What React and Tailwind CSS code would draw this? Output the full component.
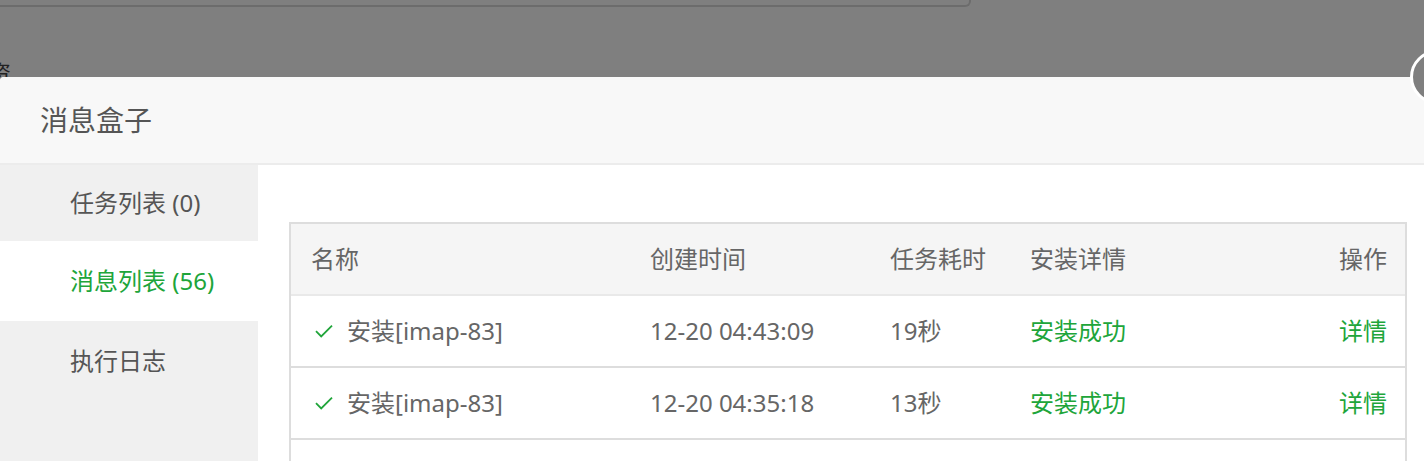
import { Check } from 'lucide-react';

const rows = [
    { name: '安装[imap-83]', time: '12-20 04:43:09', cost: '19秒', status: '安装成功' },
    { name: '安装[imap-83]', time: '12-20 04:35:18', cost: '13秒', status: '安装成功' },
];

function CheckMark() {
    return (
        <svg width="18" height="14" viewBox="0 0 18 14" fill="none" className="shrink-0">
            <path d="M1 7.2 6.2 12.4 17 1.6" stroke="#20a53a" strokeWidth="1.8" />
        </svg>
    );
}

export default function App() {
    return (
        <div className="relative w-[1424px] h-[461px] overflow-hidden bg-[#7f7f7f] font-['Noto_Sans','Noto_Sans_CJK_SC',sans-serif]">
            {/* page behind the overlay */}
            <div className="h-[77px] overflow-hidden">
                <div className="h-[7px] w-[971px] border-b-2 border-r-2 border-[#6c6c6c] rounded-br-[6px]" />
                <div className="mt-[54px] -ml-[11px] text-[22px] leading-none text-[#222]">资</div>
            </div>

            {/* modal */}
            <div className="w-[1437px] h-[384px] flex flex-col rounded-tl-[4px] overflow-hidden bg-white">
                <div className="h-[88px] shrink-0 flex items-center px-[40px] bg-[#f8f8f8] border-b-2 border-[#ececec] text-[28px] text-[#555]">
                    消息盒子
                </div>
                <div className="flex flex-1">
                    <div className="w-[258px] shrink-0 bg-[#f0f0f0] text-[24px] text-[#555]">
                        <div className="h-[76px] flex items-center pl-[70px]">任务列表 (0)</div>
                        <div className="h-20 flex items-center pl-[70px] bg-white text-[#20a53a]">消息列表 (56)</div>
                        <div className="h-20 flex items-center pl-[70px]">执行日志</div>
                    </div>
                    <div className="flex-1 bg-white pl-[31px] pr-[30px] pt-[57px]">
                        <div className="border-2 border-[#dddddd] text-[24px] text-[#666]">
                            <div className="h-[72px] flex items-center bg-[#f5f5f5] border-b-2 border-[#e9e9e9]">
                                <div className="w-[339px] pl-[20px]">名称</div>
                                <div className="w-[240px] pl-[20px]">创建时间</div>
                                <div className="w-[140px] pl-[20px]">任务耗时</div>
                                <div className="w-[200px] pl-[20px]">安装详情</div>
                                <div className="flex-1 pr-[18px] text-right">操作</div>
                            </div>
                            {rows.map((r, i) => (
                                <div key={i} className="h-[72px] flex items-center border-b-2 border-[#dddddd]">
                                    <div className="w-[339px] pl-[24px] flex items-center gap-[14px]">
                                        <CheckMark />
                                        <span>{r.name}</span>
                                    </div>
                                    <div className="w-[240px] pl-[20px]">{r.time}</div>
                                    <div className="w-[140px] pl-[20px]">{r.cost}</div>
                                    <div className="w-[200px] pl-[20px] text-[#20a53a]">{r.status}</div>
                                    <div className="flex-1 pr-[18px] text-right text-[#20a53a]">详情</div>
                                </div>
                            ))}
                            <div className="h-[72px]" />
                        </div>
                    </div>
                </div>
            </div>

            {/* close button */}
            <div className="absolute left-[1410px] top-[50px] w-[54px] h-[54px] rounded-full border-[3px] border-white bg-[#7f7f7f]" />
        </div>
    );
}
